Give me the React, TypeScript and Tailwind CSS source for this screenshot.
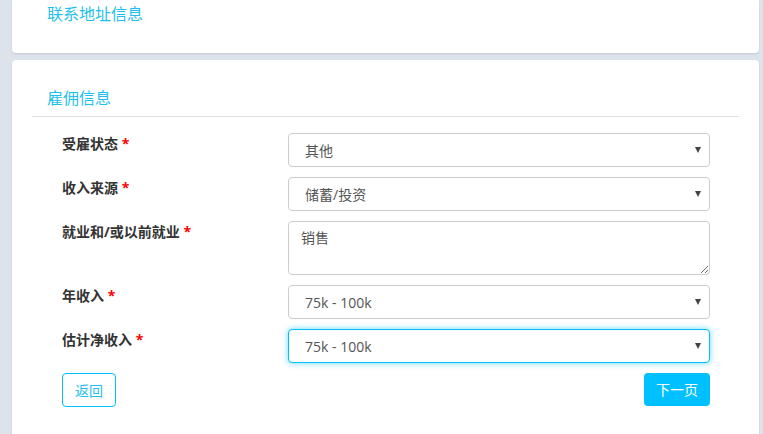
import React from "react";

const font = { fontFamily: '"Open Sans", "Noto Sans CJK SC", sans-serif' };

function Arrow() {
  return (
    <svg className="absolute right-[8px] top-1/2 -translate-y-1/2" width="6" height="6" viewBox="0 0 6 6">
      <path d="M0 0h6L3 6z" fill="#444" />
    </svg>
  );
}

function SelectBox({ value, focused = false }: { value: string; focused?: boolean }) {
  return (
    <div
      className={`relative h-[34px] rounded-[4px] border bg-white pl-[16px] flex items-center text-[14px] text-[#555] ${
        focused
          ? "border-[#00bfff] shadow-[0_0_6px_rgba(0,191,255,0.6)]"
          : "border-[#ccc]"
      }`}
    >
      {value}
      <Arrow />
    </div>
  );
}

function Label({ text }: { text: string }) {
  return (
    <div className="w-[226px] shrink-0 pt-[1px] text-[14px] font-bold text-[#333] leading-[20px]">
      {text} <span className="text-[#ff0000]">*</span>
    </div>
  );
}

export default function App() {
  return (
    <div className="h-[434px] overflow-hidden bg-[#dde3ea] pl-[12px] pr-[4px]" style={font}>
      <div className="h-[53px] rounded-b-[4px] bg-white shadow-[0_1px_2px_rgba(0,0,0,0.12)] pl-[35px] pt-[3px]">
        <div className="text-[16px] leading-[22px] text-[#1fbff0]">联系地址信息</div>
      </div>

      <div className="mt-[7px] h-[400px] rounded-[4px] bg-white shadow-[0_1px_2px_rgba(0,0,0,0.12)] pt-[27px]">
        <div className="mx-[20px] border-b border-[#ddd] pb-[7px] pl-[15px]">
          <div className="text-[16px] leading-[22px] text-[#1fbff0]">雇佣信息</div>
        </div>

        <div className="pl-[50px] pr-[49px] pt-[16px] flex flex-col gap-[10px]">
          <div className="flex">
            <Label text="受雇状态" />
            <div className="flex-1">
              <SelectBox value="其他" />
            </div>
          </div>
          <div className="flex">
            <Label text="收入来源" />
            <div className="flex-1">
              <SelectBox value="储蓄/投资" />
            </div>
          </div>
          <div className="flex">
            <Label text="就业和/或以前就业" />
            <div className="flex-1 h-[54px]">
              <textarea
                readOnly
                defaultValue="销售"
                className="block h-[54px] w-full resize-y rounded-[4px] border border-[#ccc] px-[12px] pt-[6px] text-[14px] leading-[20px] text-[#555] outline-none"
                style={font}
              />
            </div>
          </div>
          <div className="flex">
            <Label text="年收入" />
            <div className="flex-1">
              <SelectBox value="75k - 100k" />
            </div>
          </div>
          <div className="flex">
            <Label text="估计净收入" />
            <div className="flex-1">
              <SelectBox value="75k - 100k" focused />
            </div>
          </div>
          <div className="flex justify-between items-start">
            <button className="h-[34px] w-[54px] rounded-[4px] border border-[#00bfff] bg-white text-[14px] text-[#1fbff0]">
              返回
            </button>
            <button className="h-[33px] w-[66px] rounded-[4px] bg-[#00c0ff] text-[14px] text-white">
              下一页
            </button>
          </div>
        </div>
      </div>
    </div>
  );
}
